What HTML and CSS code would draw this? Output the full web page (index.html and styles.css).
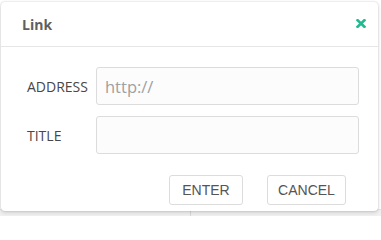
FILE: index.html
```html
<!DOCTYPE html>
<html lang="en">
<head>
<meta charset="utf-8">
<title>Link</title>
<link rel="stylesheet" href="styles.css">
</head>
<body>
<div class="page">
  <div class="page-foot">
    <div class="foot-cell"></div>
    <div class="foot-cell"></div>
  </div>
</div>
<div class="modal">
  <div class="modal-header">
    <span class="modal-title">Link</span>
    <span class="close" aria-label="Close">
      <svg width="10" height="9" viewBox="0 0 10 9"><path d="M1.6 1.2 L8.4 7.8 M8.4 1.2 L1.6 7.8" stroke="#23b991" stroke-width="2.6" stroke-linecap="square" fill="none"/></svg>
    </span>
  </div>
  <div class="modal-body">
    <div class="form">
      <label class="label">ADDRESS</label>
      <input class="field" type="text" placeholder="http://">
      <label class="label">TITLE</label>
      <input class="field" type="text">
    </div>
  </div>
  <div class="modal-footer">
    <button class="btn btn-enter">ENTER</button>
    <button class="btn btn-cancel">CANCEL</button>
  </div>
</div>
</body>
</html>
```
FILE: styles.css
```css
html, body {
  margin: 0;
  padding: 0;
  background: #fff;
}
body {
  width: 381px;
  height: 216px;
  overflow: hidden;
  position: relative;
  font-family: "Open Sans", "DejaVu Sans", sans-serif;
}
.page {
  height: 216px;
  display: flex;
  flex-direction: column;
  justify-content: flex-end;
}
.page-foot {
  height: 6px;
  display: grid;
  grid-template-columns: 190px 1fr;
  background: #f1f1f1;
  border-top: 1px solid #e6e6e6;
}
.foot-cell + .foot-cell {
  border-left: 1px solid #d8d8d8;
}
.modal {
  position: absolute;
  left: 1px;
  top: 2px;
  width: 377px;
  height: 209px;
  background: #fff;
  border-radius: 4px;
  box-shadow: 0 0 2px rgba(0,0,0,0.22), 0 2px 4px rgba(0,0,0,0.12);
  display: flex;
  flex-direction: column;
}
.modal-header {
  height: 44px;
  border-bottom: 1px solid #e6e6e6;
  display: flex;
  align-items: center;
  justify-content: space-between;
  padding: 0 12px 0 21px;
}
.modal-title {
  font-size: 14px;
  font-weight: 700;
  color: #5f5f5f;
}
.close {
  display: flex;
  margin-top: -1px;
}
.modal-body {
  padding: 20px 19px 0 26px;
}
.form {
  display: grid;
  grid-template-columns: 69px 263px;
  row-gap: 11px;
  align-items: center;
}
.label {
  font-size: 14px;
  color: #474747;
}
.field {
  box-sizing: border-box;
  height: 38px;
  width: 263px;
  border: 1px solid #dcdcdc;
  border-radius: 3px;
  background: #fcfcfc;
  padding: 0 8px;
  font-family: "Open Sans", sans-serif;
  font-size: 16.5px;
  color: #333;
  outline: none;
}
.field::placeholder {
  color: #a0a0a0;
}
.modal-footer {
  display: flex;
  justify-content: flex-end;
  gap: 24px;
  padding: 21px 32px 0 0;
}
.btn {
  box-sizing: border-box;
  height: 30px;
  padding: 0;
  border: 1px solid #dcdcdc;
  border-radius: 3px;
  background: #fff;
  font-family: "Liberation Sans", Arial, sans-serif;
  font-size: 14px;
  color: #555;
  text-align: center;
}
.btn-enter {
  width: 74px;
}
.btn-cancel {
  width: 79px;
}
```
